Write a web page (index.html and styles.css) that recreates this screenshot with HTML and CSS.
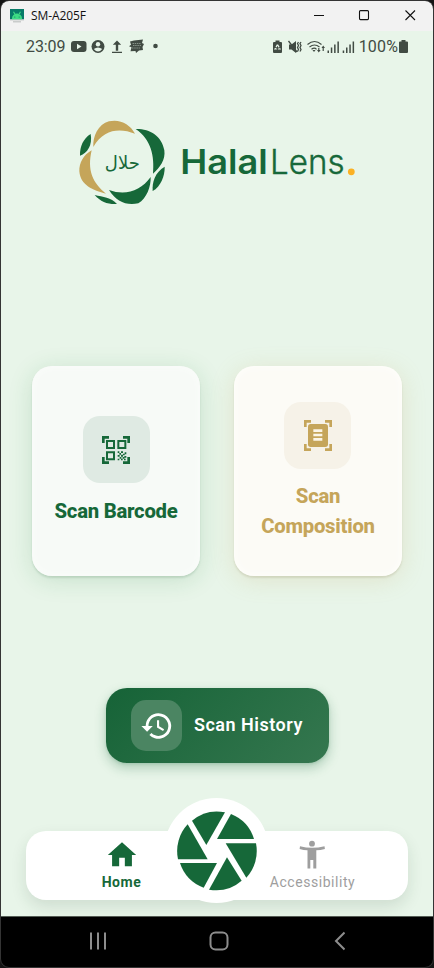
FILE: index.html
```html
<!DOCTYPE html>
<html lang="en">
<head>
<meta charset="utf-8">
<title>SM-A205F</title>
<link rel="stylesheet" href="styles.css">
</head>
<body>
<div class="window">
  <header class="titlebar">
    <svg class="app-icon" width="14" height="14" viewBox="0 0 14 14"><path fill="#087b68" d="M0 0h14v10.500H0z"/><path fill="#3ddc84" d="M2 9.500a5 5 0 0 1 10 0V10.500H2zM3 3l1-.5 1.500 2.500-1 .5zM11 3l-1-.5L8.500 5l1 .5z"/><circle cx="4.800" cy="8" r=".6" fill="#087b68"/><circle cx="9.200" cy="8" r=".6" fill="#087b68"/><path fill="#c9cccb" d="M0 10.500h14v1H0zM3 12h8v1.500H3z"/></svg>
    <span class="title">SM-A205F</span>
    <svg class="controls" width="104" height="12" viewBox="0 0 104 12" fill="none" stroke="#111" stroke-width="1.100"><path d="M0 5.500h10M91.500 .5l9.500 9.500M101 .5L91.500 10"/><rect x="45.500" y=".6" width="9" height="9" rx="1"/></svg>
  </header>
  <main class="app">
    <div class="status">
      <span class="clock">23:09</span>
      <svg class="status-left" width="90" height="16" viewBox="0 0 90 16" fill="#414b43"><rect y="2" width="15.500" height="11" rx="3"/><path fill="#e8f5e9" d="M6 4.800l4.500 2.700L6 10.200z"/><circle cx="27" cy="7.500" r="6.500"/><g fill="#e8f5e9"><circle cx="27" cy="5.200" r="2.200"/><path d="M22.800 10q4.200-3 8.400 0Q29 12.500 27 12.500t-4.200-2.500z"/></g><path d="M46 1.500l4.200 4.200h-3v6h-2.400v-6h-3zM41 12.800h10V14H41z"/><path d="M59 2.500l4-1 9-1-1 3.500 2 1-1.500 3 .5 3-4 .5-3 2.500-.5-2-5 .2 1-4-2.500-1 2-1.500z"/><path d="M61.500 4.500h8M62 6.500h8M61 9h8" stroke="#a3b0a5" stroke-width=".7" stroke-dasharray="1.500 .7"/><circle cx="84.500" cy="7" r="2.300"/></svg>
      <svg class="status-right" width="83" height="16" viewBox="0 0 83 16" fill="#414b43"><path d="M2.500 1.500h4V3H8q1 0 1 1v9q0 1-1 1H1q-1 0-1-1V4q0-1 1-1h1.500z"/><path d="M4.500 5.500L2 10h5z" fill="none" stroke="#e8f5e9" stroke-width="1.200" stroke-dasharray="3 1"/><path d="M16 5.500h2.500L23 2v12l-4.500-3.500H16z"/><path fill="none" stroke="#414b43" stroke-width="1.300" d="M15.500 2L24 13M25.500 3l-1 1.500 1 2-1 2 1 2-1 2M28 3l-1 1.500 1 2-1 2 1 2-1 2"/><path fill="none" stroke="#414b43" stroke-width="1.200" d="M34.500 5.500q7-6 14 0M36.500 8q5-4 10 0M38.500 10.300q3-2.300 5 0"/><path d="M39.500 11h3L41 13zM44 11h1.200V9h1.200v2h1.200l-1.800 2.500zM48.500 9l1.700-2.500L52 9h-1.200v3h-1.200V9z"/><path d="M54.500 11.500H56V14h-1.500zM57.800 8.500h1.500V14h-1.500zM61.100 5.500h1.500V14h-1.500zM64.400 2.500h1.500V14h-1.500zM69.700 11.500h1.500V14h-1.500zM73 8.500h1.500V14H73zM76.300 5.500h1.500V14h-1.500zM79.600 2.500h1.500V14h-1.500z"/></svg>
      <span class="percent">100%</span>
      <svg class="battery" width="9" height="14" viewBox="0 0 9 14"><path fill="#414b43" d="M2.500 0h4v1.500H8q1 0 1 1V12q0 1-1 1H1q-1 0-1-1V2.500q0-1 1-1h1.500z"/></svg>
    </div>

    <svg class="logo" width="300" height="105" viewBox="0 0 300 105">
      <g transform="scale(.33333)">
        <g fill="#c5a55a"><path d="M70 111C68 80 84 43 117 34c32-8 63 8 78 37C151 54 102 55 70 111z"/><path d="M65 121C40 135 27 160 28 184c3 42 41 57 80 67C68 218 51 182 65 121z"/></g>
        <g fill="#166839"><path d="M197 57c42-1 78 20 86 64 4 29-13 52-34 70 5-52-5-102-52-134z"/><path d="M284 170c1 27-12 60-36 73-2-27 7-56 36-73z"/><path d="M117 240c49 18 95 3 125-39 1 29-12 64-37 79-36 8-67-6-88-40z"/><path d="M74 255c25 6 49 7 67 27-25 2-49-6-67-27z"/><path d="M62 72C40 85 29 110 30 137c22-8 38-31 32-65z"/></g>
      </g>
      <text class="arabic" x="52.300" y="59" text-anchor="middle" textLength="35" lengthAdjust="spacingAndGlyphs">حلال</text>
      <text class="word-bold" x="110.200" y="64.300" textLength="87.500" lengthAdjust="spacingAndGlyphs">Halal</text>
      <text class="word-light" x="200" y="64.300" textLength="74.500" lengthAdjust="spacingAndGlyphs">Lens</text>
      <circle cx="281.300" cy="61.800" r="3.400" fill="#fbb124"/>
    </svg>

    <section class="cards">
      <article class="card card-green">
        <div class="tile"><svg width="28" height="28" viewBox="0 0 84 84"><g fill="none" stroke="#166839" stroke-width="8"><path d="M4 21V4H21M63 4h17V21M4 63v17H21M63 80h17V63"/><path stroke-width="6" d="M15 15h21v21H15zM49 15h21v21H49zM15 49h21v21H15z"/></g><path fill="#166839" d="M47 46h5v5h-5zM57 46h6v5h-6zM68 49h5v6h-5zM52 51h5v5h-5zM63 53h5v5h-5zM47 57h6v5h-6zM57 56h6v6h-6zM67 60h6v5h-6zM53 63h5v5h-5zM62 63h5v5h-5zM47 68h5v5h-5zM57 68h5v5h-5zM66 68h5v5h-5z"/></svg></div>
        <h2>Scan Barcode</h2>
      </article>
      <article class="card card-gold">
        <div class="tile"><svg width="28" height="31" viewBox="0 0 84 93"><path fill="none" stroke="#c5a55a" stroke-width="8" d="M4 21V4H21M63 4h17V21M4 72v17H21M63 89h17V72"/><rect x="12" y="12" width="60" height="69" rx="8" fill="#c5a55a"/><path fill="#fbf5e6" d="M28 28h27v8H28zM28 41h27v8H28zM28 54h27v8H28z"/></svg></div>
        <h2>Scan<br>Composition</h2>
      </article>
    </section>

    <div class="history">
      <div class="history-tile"><svg width="34" height="34" viewBox="0 0 24 24"><path fill="#fff" d="M13 3a9 9 0 0 0-9 9H1l4 4 4-4H6a7 7 0 1 1 2.060 4.940l-1.420 1.420A9 9 0 1 0 13 3zm-1 5v5l4.280 2.540.72-1.210-3.500-2.080V8z"/></svg></div>
      <span>Scan History</span>
    </div>

    <nav class="tabs">
      <div class="tab tab-home"><svg width="34" height="34" viewBox="0 0 24 24"><path fill="#166839" d="M10 20v-6h4v6h5v-8h3L12 3 2 12h3v8z"/></svg><span>Home</span></div>
      <div class="tab tab-access"><svg width="34" height="34" viewBox="0 0 34 34" fill="#9e9e9e"><circle cx="16" cy="5.700" r="2.900"/><path d="M4 8.200q12 3 24.500 0l.4 2.700q-4.400 1.100-8.600 1.300v18.300h-3V22h-3v8.500h-2.800V12.200q-4-.2-7.900-1.300z"/></svg><span>Accessibility</span></div>
      <div class="shutter"><svg width="80" height="80" viewBox="67 61 240 240"><g fill="#166839"><path d="M112 90A118 118 0 0 1 211 65L155 163z"/><path d="M229 70A118 118 0 0 1 298 145H187z"/><path d="M213 158H304A118 118 0 0 1 275 261z"/><path d="M217 200L261 270A118 118 0 0 1 163 297z"/><path d="M76 217H187L147 291A118 118 0 0 1 76 217z"/><path d="M99 101L159 206H70A118 118 0 0 1 99 101z"/></g></svg></div>
    </nav>
  </main>
  <footer class="system-nav">
    <svg width="256" height="20" viewBox="0 0 256 20" fill="none" stroke="#8d8d8d" stroke-width="2"><path d="M2 1.500v17M9 1.500v17M16 1.500v17M255.500 1.500L247 10l8.500 8.500"/><rect x="121.500" y="1.500" width="17" height="17" rx="5"/></svg>
  </footer>
</div>
</body>
</html>
```
FILE: styles.css
```css
* { box-sizing: border-box; }
body { margin: 0; width: 434px; height: 968px; overflow: hidden; background: #151515; font-family: Roboto, sans-serif; }
.window { width: 434px; height: 968px; border: 1px solid #343434; border-radius: 9px; overflow: hidden; display: flex; flex-direction: column; background: #000; }
.titlebar { height: 30px; flex: none; display: flex; align-items: center; padding: 0 15px 0 9px; background: #f2f2f2; }
.title { margin: -2px 0 0 7px; color: #111; font: 12px "Open Sans", sans-serif; letter-spacing: -.1px; }
.controls { margin-left: auto; }
.app { height: 885px; flex: none; display: flex; flex-direction: column; background: #e8f5e9; }
.status { height: 31px; flex: none; display: flex; align-items: center; padding: 0 25px 0 25px; color: #414b43; font-size: 16px; }
.clock { width: 45px; letter-spacing: -.1px; }
.status-right { margin-left: auto; }
.percent { margin-left: 3px; letter-spacing: .15px; }
.battery { margin-left: 1px; }
.logo { flex: none; margin: 48px 0 0 69px; }
.arabic { font: 18px "DejaVu Sans", sans-serif; fill: #166839; }
.word-bold { font: 600 34px Inter, sans-serif; fill: #166839; }
.word-light { font: 300 34px Inter, sans-serif; fill: #166839; stroke: #166839; stroke-width: .4px; }
.cards { display: flex; gap: 34px; margin: 151px 0 0 31px; }
.card { width: 168px; height: 210px; border-radius: 20px; display: flex; flex-direction: column; align-items: center; justify-content: center; text-align: center; }
.card-green { background: #f7faf7; color: #166839; box-shadow: inset 0 0 9px #fbfdfb, 0 2px 2px rgba(22,80,40,.13), 0 4px 24px rgba(22,124,49,.16); }
.card-gold { background: #fcfbf6; color: #c5a55a; box-shadow: inset 0 0 9px #fffefc, 0 2px 2px rgba(90,80,30,.13), 0 4px 24px rgba(197,165,90,.2); }
.tile { width: 67px; height: 67px; border-radius: 17px; display: flex; align-items: center; justify-content: center; }
.card-green .tile { background: #dfeae3; }
.card-gold .tile { background: #f6f2e8; margin: 1px 1px -1px 0; }
.card h2 { margin: 13px 0 0; font-size: 20.300px; line-height: 30px; font-weight: 800; letter-spacing: -.25px; }
.history { width: 223px; height: 75px; margin: 112px 0 0 105px; border-radius: 21px; display: flex; align-items: center; padding-left: 25px; background: linear-gradient(135deg, #166337, #35774f); box-shadow: 0 5px 12px rgba(22,104,57,.28), 0 1px 3px rgba(22,104,57,.15); color: #fff; font-size: 18px; font-weight: 600; letter-spacing: .5px; }
.history span { margin-top: -3px; }
.history-tile { width: 51px; height: 51px; margin-right: 12px; border-radius: 15px; display: flex; align-items: center; justify-content: center; background: #4b8562; }
.tabs { position: relative; width: 382px; height: 69px; margin: 68px 0 0 25px; border-radius: 20px; background: #fff; box-shadow: 0 7px 16px rgba(22,60,35,.12); display: grid; grid-template-columns: 191px 191px; justify-items: center; }
.tab { display: flex; flex-direction: column; align-items: center; font-size: 14px; letter-spacing: .55px; padding-top: 7px; line-height: 20px; }
.tab-home { color: #166839; font-weight: 700; }
.tab-access { color: #9e9e9e; }
.shutter { position: absolute; left: 138px; top: -33px; width: 105px; height: 105px; border-radius: 50%; background: #fff; display: flex; align-items: center; justify-content: center; }
.system-nav { flex: 1; border-top: 1px solid #555e56; display: flex; align-items: center; padding: 0 0 2px 88px; }
```
